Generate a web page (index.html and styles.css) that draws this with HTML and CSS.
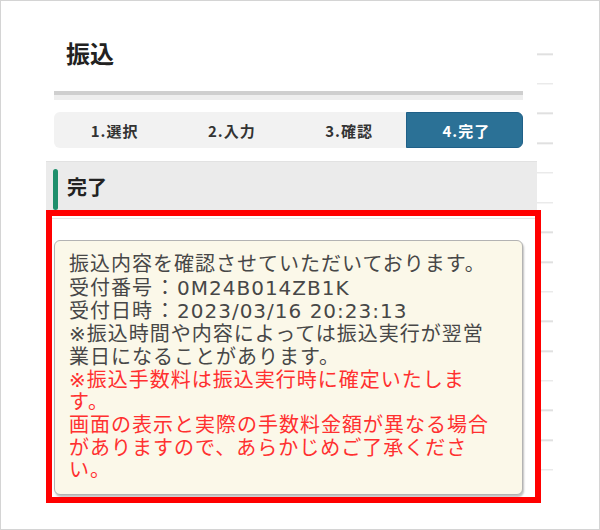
FILE: index.html
```html
<!DOCTYPE html>
<html lang="ja">

<head>
    <meta charset="UTF-8">
    <meta name="viewport" content="width=device-width, initial-scale=1.0">
    <title>振込 完了</title>
    <link rel="stylesheet" href="styles.css">
</head>

<body>
    <div class="frame">
        <div class="main">
            <h1 class="title">振込</h1>
            <div class="rule"></div>

            <div class="steps">
                <div class="step">1.選択</div>
                <div class="step">2.入力</div>
                <div class="step">3.確認</div>
                <div class="step active">4.完了</div>
            </div>

            <h2 class="section-head">完了</h2>
            <div class="divider"></div>

            <div class="notice">
                <p>振込内容を確認させていただいております。</p>
                <p>受付番号<span class="colon">：</span>0M24B014ZB1K</p>
                <p>受付日時<span class="colon">：</span>2023/03/16 20:23:13</p>
                <p>※振込時間や内容によっては振込実行が翌営業日になることがあります。</p>
                <p class="warn">※振込手数料は振込実行時に確定いたします。</p>
                <p class="warn">画面の表示と実際の手数料金額が異なる場合がありますので、あらかじめご了承ください。</p>
            </div>
        </div>
        <div class="rail"></div>

        <!-- 赤枠の注釈 -->
        <div class="highlight"></div>
    </div>
</body>

</html>
```

FILE: styles.css
```css
body {
    margin: 0;
    background-color: #fff;
    font-family: "Noto Sans CJK JP", sans-serif;
    color: #222;
}

.frame {
    position: relative;
    display: flex;
    align-items: flex-start;
    width: 600px;
    height: 530px;
    box-sizing: border-box;
    border: 1px solid #d4d4d4;
    overflow: hidden;
}

.main {
    width: 491px;
    margin-left: 45px;
    padding-top: 37px;
}

.title {
    margin: 0;
    padding-left: 20px;
    font-size: 24px;
    line-height: 30px;
    font-weight: bold;
    color: #222;
}

.rule {
    margin: 23px 14px 0 8px;
    height: 5px;
    border-top: 4px solid #cfcfcf;
    background-color: #eeeeee;
}

.steps {
    display: grid;
    grid-template-columns: repeat(4, 1fr);
    margin: 12px 14px 0 8px;
    height: 36px;
    background-color: #f2f2f2;
    border-radius: 6px;
}

.step {
    display: flex;
    align-items: center;
    justify-content: center;
    padding-left: 4px;
    font-size: 15px;
    font-weight: bold;
    letter-spacing: 1px;
    color: #333;
}

.step.active {
    background-color: #2b7196;
    border: 1px solid #1f6088;
    border-radius: 0 6px 6px 0;
    color: #fff;
}

.section-head {
    display: flex;
    align-items: center;
    margin: 13px 0 0 0;
    height: 50px;
    padding-left: 7px;
    background-color: #ebebeb;
    border-top: 1px solid #e2e2e2;
    box-sizing: border-box;
    font-size: 20px;
    font-weight: bold;
    color: #222;
}

.section-head::before {
    content: "";
    align-self: stretch;
    width: 5px;
    margin: 7px 9px 1px 0;
    border-radius: 3px;
    background-color: #1f8f6c;
}

.divider {
    margin-top: 7px;
    border-top: 1px solid #e6e6e6;
}

.notice {
    margin: 21px 14px 0 8px;
    padding: 12px 23px 12px 14px;
    background-color: #fbf8e9;
    border: 1px solid #b3b3b3;
    border-radius: 6px;
    box-shadow: 1px 2px 2px rgba(0, 0, 0, 0.25);
    font-family: "DejaVu Sans", "Noto Sans CJK JP", sans-serif;
    font-size: 20px;
    line-height: 22.7px;
    letter-spacing: 1px;
    color: #474747;
}

.notice p {
    margin: 0;
}

/* 全角コロンの幅 */
.notice .colon {
    display: inline-block;
    width: 24px;
    text-align: center;
    letter-spacing: 0;
    font-family: "Noto Sans CJK JP", sans-serif;
}

.notice .warn {
    color: #ff3030;
}

.rail {
    width: 16px;
    height: 470px;
    margin-top: 40px;
    background-image: repeating-linear-gradient(to bottom, transparent 0, transparent 28px, #e0e0e0 28px, #e0e0e0 29.7px);
    background-position: 0 -15.7px;
}

.highlight {
    position: absolute;
    left: 45px;
    top: 209px;
    width: 495px;
    height: 293px;
    box-sizing: border-box;
    border: 6px solid #ff0000;
}
```
